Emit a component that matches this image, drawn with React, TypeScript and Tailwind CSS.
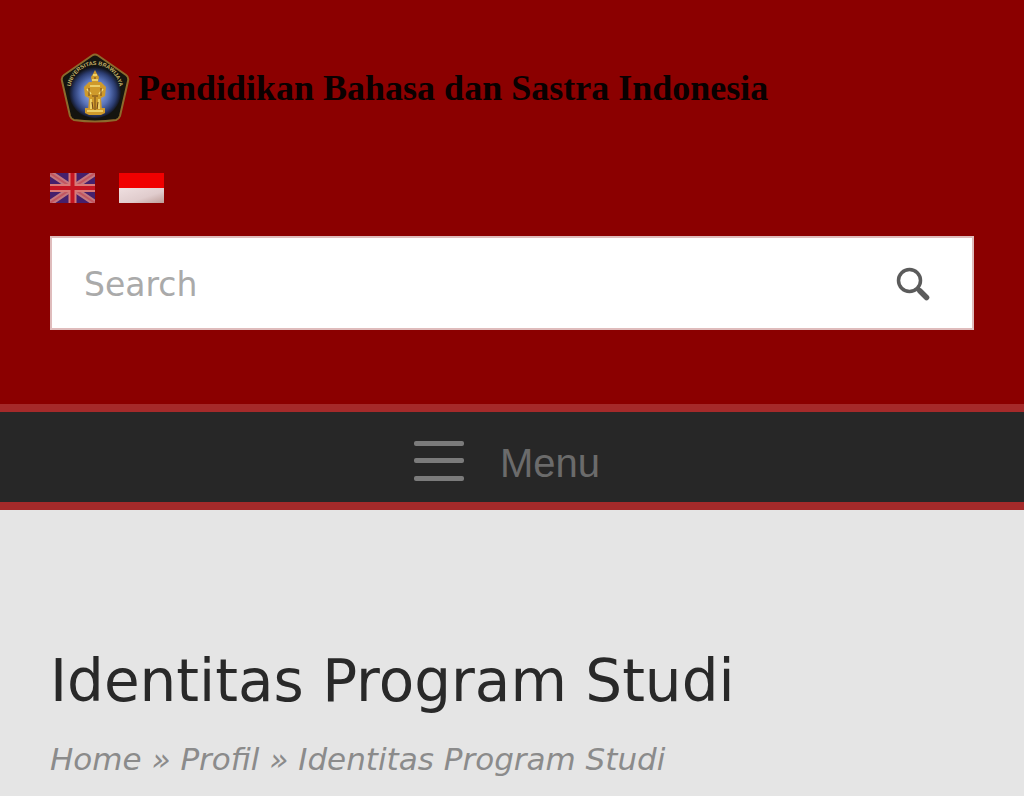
const crumbs = [
  { label: 'Home', href: '#home' },
  { label: 'Profil', href: '#profil' },
];

function UniversityCrest() {
  return (
    <svg viewBox="0 0 70 70" className="h-[70px] w-[70px] shrink-0" aria-hidden="true">
      <defs>
        <radialGradient id="crest-glow" cx="50%" cy="52%" r="50%">
          <stop offset="0%" stopColor="#b4c3ea" />
          <stop offset="55%" stopColor="#5872b8" />
          <stop offset="82%" stopColor="#2b3c70" />
          <stop offset="100%" stopColor="#11131a" />
        </radialGradient>
        <path id="crest-arc" d="M10 39 A25 27 0 0 1 60 39" />
      </defs>
      <path
        d="M32 2.500 Q35 .5 38 2.500 L66 22 Q69 24 68 28 L60 63 Q59 66 56 67 Q35 70 14 67 Q11 66 10 63 L2 28 Q1 24 4 22 Z"
        fill="#14140f"
        stroke="#8d6a2c"
        strokeWidth="2"
      />
      <ellipse cx="35" cy="39" rx="26" ry="26" fill="url(#crest-glow)" />
      <text fill="#c9b56b" fontSize="5.500" fontWeight="bold" fontFamily="Liberation Sans, sans-serif">
        <textPath href="#crest-arc" startOffset="50%" textAnchor="middle">UNIVERSITAS BRAWIJAYA</textPath>
      </text>
      <g fill="#cf9a2b">
        <path d="M35 17 L37 21 L39 24 L38 29 L32 29 L31 24 L33 21 Z" />
        <path d="M29 29 L41 29 L46 34 L45 43 L41 45 L42 58 L28 58 L29 45 L25 43 L24 34 Z" />
        <path d="M25 55 H45 V60 L41 62 H29 L25 60 Z" />
      </g>
      <g fill="none" stroke="#f6df7e" strokeWidth="1.500">
        <path d="M33 22 H37 M32 27 H38 M30 33 H40 M27 36 L31 41 M43 36 L39 41 M31 46 V56 M39 46 V56 M27 58 H43" />
      </g>
      <g fill="none" stroke="#714519" strokeWidth="1">
        <path d="M34 25 H36 M29 35 V43 M41 35 V43 M32 43 H38 M35 44 V57 M32 49 L33 56 M38 49 L37 56" />
      </g>
    </svg>
  );
}

function BritishFlag() {
  return (
    <svg viewBox="0 0 45 30" className="h-[30px] w-[45px]" aria-hidden="true">
      <rect width="45" height="30" fill="#45206c" />
      <path d="M0 0 L45 30 M45 0 L0 30" stroke="#c4787f" strokeWidth="6" />
      <path d="M0 0 L45 30 M45 0 L0 30" stroke="#c25660" strokeWidth="2" />
      <path d="M22.500 0 V30 M0 15 H45" stroke="#d97976" strokeWidth="8" />
      <path d="M22.500 0 V30 M0 15 H45" stroke="#c51522" strokeWidth="4" />
    </svg>
  );
}

function IndonesianFlag() {
  return (
    <svg viewBox="0 0 45 30" className="h-[30px] w-[45px]" aria-hidden="true">
      <defs>
        <linearGradient id="flag-white" x1="0" y1="0" x2="1" y2="1">
          <stop offset="0%" stopColor="#efdfe0" />
          <stop offset="60%" stopColor="#e0cccd" />
          <stop offset="100%" stopColor="#bd9e99" />
        </linearGradient>
      </defs>
      <rect width="45" height="15" fill="#f00000" />
      <rect y="15" width="45" height="15" fill="url(#flag-white)" />
    </svg>
  );
}

export default function App() {
  return (
    <div className="min-h-screen bg-[#e5e5e5] font-['DejaVu_Sans',sans-serif]">
      <header className="bg-[#8b0000] px-[50px] pt-[53px] pb-[74px]">
        <a href="#home" className="ml-[10px] flex items-center gap-2">
          <UniversityCrest />
          <span className="whitespace-nowrap font-['Liberation_Serif',serif] text-[36px] leading-[70px] font-bold text-[#090000]">
            Pendidikan Bahasa dan Sastra Indonesia
          </span>
        </a>

        <nav aria-label="Language" className="mt-[50px] flex gap-6">
          <a href="#en" aria-label="English">
            <BritishFlag />
          </a>
          <a href="#id" aria-label="Bahasa Indonesia">
            <IndonesianFlag />
          </a>
        </nav>

        <form role="search" className="mt-[33px] flex h-[94px] items-center border-2 border-[#dfbcbc] bg-white pr-[38px] pl-8">
          <input
            type="text"
            aria-label="Search"
            placeholder="Search"
            className="h-full min-w-0 flex-1 bg-transparent pt-0.5 text-[33px] text-[#292929] outline-none placeholder:text-[#aaaaaa]"
          />
          <button type="button" aria-label="Submit search" className="p-1 pt-1.5">
            <svg viewBox="0 0 34 34" className="h-[34px] w-[34px]" fill="none" stroke="#5b5b5b" aria-hidden="true">
              <circle cx="13.500" cy="13.500" r="11" strokeWidth="3.500" />
              <path d="M21.500 21.500 L25 25" strokeWidth="4" />
              <path d="M24 24 L30.500 30.500" strokeWidth="5.500" strokeLinecap="round" />
            </svg>
          </button>
        </form>
      </header>

      <button
        type="button"
        className="flex h-[106px] w-full items-center justify-center gap-9 border-y-8 border-[#a52a2a] bg-[#272727] pt-2 pr-[10px] font-['Liberation_Sans',sans-serif] text-[#6b6b6b]"
      >
        <svg viewBox="0 0 50 40" className="h-10 w-[50px]" fill="#7b7b7b" aria-hidden="true">
          <rect width="50" height="5" rx="2" />
          <rect y="17" width="50" height="5" rx="2" />
          <rect y="35" width="50" height="5" rx="2" />
        </svg>
        <span className="pt-1 text-[40px] leading-[48px]">Menu</span>
      </button>

      <main className="px-[50px] pt-[135px] pb-4">
        <h1 className="text-[58px] leading-[72px] text-[#292929]">Identitas Program Studi</h1>
        <nav aria-label="Breadcrumb" className="mt-5 text-[31px] leading-[44px] text-[#8b8b8b] italic">
          {crumbs.map((crumb) => (
            <span key={crumb.href}>
              <a href={crumb.href}>{crumb.label}</a>
              {' » '}
            </span>
          ))}
          <span aria-current="page">Identitas Program Studi</span>
        </nav>
      </main>
    </div>
  );
}
